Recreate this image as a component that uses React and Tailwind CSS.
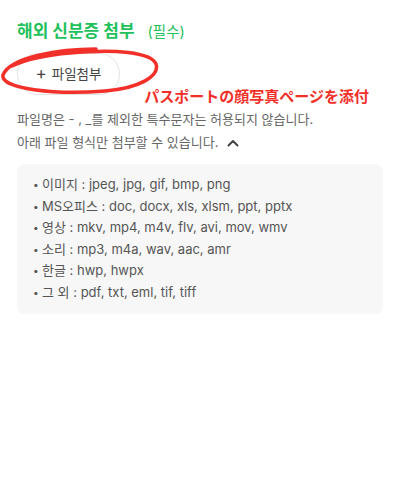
import React from 'react'

const formats = [
  '이미지 : jpeg, jpg, gif, bmp, png',
  'MS오피스 : doc, docx, xls, xlsm, ppt, pptx',
  '영상 : mkv, mp4, m4v, flv, avi, mov, wmv',
  '소리 : mp3, m4a, wav, aac, amr',
  '한글 : hwp, hwpx',
  '그 외 : pdf, txt, eml, tif, tiff',
]

const App = () => {
  return (
    <div
      className="relative w-[400px] h-[500px] bg-white px-[17px] pt-[19px]"
      style={{ fontFamily: 'Inter, "Noto Sans CJK KR", sans-serif' }}
    >
      {/* Title */}
      <div className="flex items-baseline">
        <h2 className="text-[17px] font-bold text-[#1fc15c] leading-[24px]">해외 신분증 첨부</h2>
        <span className="ml-[13px] text-[14.5px] text-[#1fc15c] leading-[24px]">(필수)</span>
      </div>

      {/* Attach button */}
      <div className="mt-[9px] flex">
        <button className="flex items-center gap-[5px] h-[42px] w-[103px] justify-center rounded-full border border-[#e3e3e3] bg-white text-[13.5px] text-[#444]">
          <span className="text-[17px] leading-none -mt-[2px]">+</span>
          <span>파일첨부</span>
        </button>
      </div>

      {/* Annotation */}
      <div className="flex justify-end pr-[14px] -mt-[9px]">
        <span
          className="text-[15px] font-bold text-[#f2302a] leading-[20px]"
          style={{ fontFamily: '"Noto Sans CJK JP", sans-serif' }}
        >
          パスポートの顔写真ページを添付
        </span>
      </div>

      {/* Notes */}
      <div className="mt-[2px] text-[13px] text-[#666] leading-[23px]">
        <p>파일명은 - , _를 제외한 특수문자는 허용되지 않습니다.</p>
        <p className="flex items-center gap-[9px]">
          아래 파일 형식만 첨부할 수 있습니다.
          <svg width="12" height="8" viewBox="0 0 12 8" fill="none">
            <path d="M1.5 6.5 L6 2 L10.5 6.5" stroke="#444" strokeWidth="2" strokeLinecap="round" strokeLinejoin="round" />
          </svg>
        </p>
      </div>

      {/* Format list */}
      <div className="mt-[10px] rounded-[8px] bg-[#f7f7f7] pl-[16px] pr-3 pt-[10px] pb-[10px]">
        <ul className="text-[13px] text-[#555] leading-[21.6px]">
          {formats.map((f) => (
            <li key={f} className="flex">
              <span className="w-[9px] text-[10px]">•</span>
              <span>{f}</span>
            </li>
          ))}
        </ul>
      </div>

      {/* Red hand-drawn ellipse */}
      <svg className="absolute left-0 top-0 pointer-events-none" width="170" height="100" viewBox="0 0 170 100" fill="none">
        <path
          d="M96 49 C 60 49, 10 57, 3 75 C 0 89, 55 95, 105 91 C 140 88, 160 76, 156 64 C 151 52, 115 49, 70 53 C 45 55, 25 60, 12 66"
          stroke="#f2302a"
          strokeWidth="3.5"
          strokeLinecap="round"
        />
      </svg>
    </div>
  )
}

export default App
